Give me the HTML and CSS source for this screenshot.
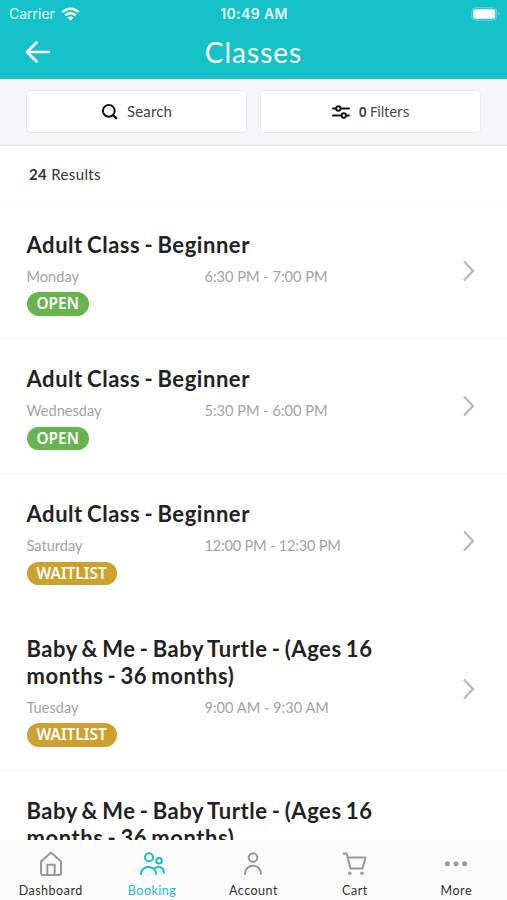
FILE: index.html
```html
<!DOCTYPE html>
<html lang="en">
<head>
<meta charset="utf-8">
<title>Classes</title>
<link rel="stylesheet" href="styles.css">
</head>
<body>
<div class="app">
  <header class="header">
    <div class="status">
      <div class="status-left">
        <span class="carrier">Carrier</span>
        <svg class="wifi" width="19" height="14" viewBox="0 0 19 14" fill="none" stroke="#fff" stroke-width="2.5"><path d="M1.3 5.2C6 .6 13 .6 17.700 5.200"/><path d="M4.300 8.400c3-2.800 7.400-2.800 10.400 0"/><path d="M9.500 13.500 6.600 10.700c1.700-1.500 4.100-1.500 5.800 0z" fill="#fff" stroke="none"/></svg>
      </div>
      <span class="clock">10:49 AM</span>
      <svg class="battery" width="29" height="14" viewBox="0 0 29 14"><rect x=".7" y=".7" width="25" height="12.600" rx="3.800" fill="none" stroke="#fff" stroke-opacity=".35"/><rect x="2.200" y="2.200" width="22" height="9.600" rx="2.200" fill="#fff"/><path d="M27.300 4.800c1.600.8 1.600 3.600 0 4.400z" fill="#fff" fill-opacity=".4"/></svg>
    </div>
    <div class="titlebar">
      <svg class="back" width="26" height="22" viewBox="0 0 26 22" fill="none" stroke="#fff" stroke-width="2.700" stroke-linecap="round" stroke-linejoin="round"><path d="M24 11H2M11.500 1.500 2 11l9.500 9.500"/></svg>
      <h1>Classes</h1>
    </div>
  </header>
  <div class="tools">
    <button class="tool"><svg width="17" height="17" viewBox="0 0 17 17" fill="none" stroke="#111" stroke-width="2"><circle cx="7.800" cy="7.800" r="5.900"/><path d="m11.800 12 4 3.900" stroke-width="2.300"/></svg><span class="t-search">Search</span></button>
    <button class="tool"><svg class="sliders" width="18" height="14" viewBox="0 0 18 14" fill="none" stroke="#111" stroke-width="1.900" stroke-linecap="round"><path d="M1 3.500h2.500M9 3.500h8M1 10.500h8M14.500 10.500H17"/><circle cx="6.300" cy="3.500" r="2.200"/><circle cx="11.800" cy="10.500" r="2.200"/></svg><span class="t-filter"><b>0</b> Filters</span></button>
  </div>
  <main class="list">
    <p class="count"><b>24</b> Results</p>
    <article class="row">
      <div class="info"><h2>Adult Class - Beginner</h2><div class="when"><span>Monday</span><span>6:30 PM - 7:00 PM</span></div><span class="badge open">OPEN</span></div>
      <svg class="chev" width="13" height="22" viewBox="0 0 13 22"><path d="m2 1.500 9 9.500-9 9.500"/></svg>
    </article>
    <article class="row">
      <div class="info"><h2>Adult Class - Beginner</h2><div class="when"><span>Wednesday</span><span>5:30 PM - 6:00 PM</span></div><span class="badge open">OPEN</span></div>
      <svg class="chev" width="13" height="22" viewBox="0 0 13 22"><path d="m2 1.500 9 9.500-9 9.500"/></svg>
    </article>
    <article class="row plain">
      <div class="info"><h2>Adult Class - Beginner</h2><div class="when"><span>Saturday</span><span class="long">12:00 PM - 12:30 PM</span></div><span class="badge wait">WAITLIST</span></div>
      <svg class="chev" width="13" height="22" viewBox="0 0 13 22"><path d="m2 1.500 9 9.500-9 9.500"/></svg>
    </article>
    <article class="row">
      <div class="info"><h2>Baby &amp; Me - Baby Turtle - (Ages 16<br>months - 36 months)</h2><div class="when"><span>Tuesday</span><span>9:00 AM - 9:30 AM</span></div><span class="badge wait">WAITLIST</span></div>
      <svg class="chev" width="13" height="22" viewBox="0 0 13 22"><path d="m2 1.500 9 9.500-9 9.500"/></svg>
    </article>
    <article class="row">
      <div class="info"><h2>Baby &amp; Me - Baby Turtle - (Ages 16<br>months - 36 months)</h2></div>
    </article>
  </main>
  <nav class="tabs">
    <a class="tab"><svg width="28" height="28" viewBox="0 0 28 28"><path d="M4 11.500 14 2.500l10 9V23a2 2 0 0 1-2 2H6a2 2 0 0 1-2-2zM10.300 25V14.800h7.400V25"/></svg><span>Dashboard</span></a>
    <a class="tab active"><svg width="28" height="28" viewBox="0 0 28 28"><circle cx="11" cy="7.300" r="4"/><circle cx="21" cy="10.800" r="2.800"/><path d="M3 24c0-9.500 14.500-9.500 15.300 0M17 18.300c3.500-3 8.800-1 9 4.500"/></svg><span>Booking</span></a>
    <a class="tab"><svg width="28" height="28" viewBox="0 0 28 28"><circle cx="14" cy="7.500" r="4.300"/><path d="M6 24c0-11 16-11 16 0"/></svg><span>Account</span></a>
    <a class="tab"><svg width="28" height="28" viewBox="0 0 28 28"><path d="M2.500 3.500h3.200L9.500 18.500h12L24.500 7.500H7"/><g class="dots"><circle cx="8.800" cy="23.300" r="1.700"/><circle cx="21" cy="23.300" r="1.700"/></g></svg><span>Cart</span></a>
    <a class="tab"><svg width="28" height="28" viewBox="0 0 28 28"><g class="dots"><circle cx="5.400" cy="13.800" r="2.500"/><circle cx="14" cy="13.800" r="2.500"/><circle cx="22.600" cy="13.800" r="2.500"/></g></svg><span>More</span></a>
  </nav>
</div>
</body>
</html>
```
FILE: styles.css
```css
* { box-sizing: border-box; }
body { margin: 0; font-family: Lato, "Noto Sans", sans-serif; color: #222; background: #fff; }
h1, h2, p { margin: 0; }
.app { display: flex; flex-direction: column; width: 507px; height: 900px; overflow: hidden; }
.header { flex: none; height: 79px; background: #14c2c8; color: #fff; border-bottom: 1px solid #2bb9c0; }
.status { display: grid; grid-template-columns: 1fr auto 1fr; align-items: center; height: 27px; padding: 0 8px 0 9px; font-family: Inter, sans-serif; }
.status-left { display: flex; align-items: center; gap: 6px; }
.carrier { font-size: 14px; color: #e4fbfb; }
.clock { font-size: 14px; font-weight: 600; letter-spacing: .4px; color: #e8fcfc; }
.battery { justify-self: end; margin-right: -1px; }
.titlebar { display: grid; grid-template-columns: 1fr auto 1fr; align-items: center; height: 50px; padding: 0 25px; }
h1 { font-size: 28px; line-height: 34px; font-weight: 400; letter-spacing: 1px; }
.tools { flex: none; display: grid; grid-template-columns: 1fr 1fr; gap: 13px; height: 67px; padding: 11px 26px 12px; background: #f5f5f8; border-bottom: 1px solid #e9e9ec; }
.tool { display: flex; align-items: center; justify-content: center; gap: 9px; background: #fff; border: 1px solid #e9e9ed; border-radius: 5px; font: 400 15px/20px Lato, sans-serif; color: #444; padding: 0; }
.t-search { padding-bottom: 2px; letter-spacing: .1px; }
.t-filter { font: 400 14px/20px "Noto Sans", sans-serif; letter-spacing: -.1px; }
.t-filter b { font-weight: 600; }
.list { flex: 1; min-height: 0; overflow: hidden; }
.count { height: 58.500px; padding-left: 29px; font-size: 15px; line-height: 57px; letter-spacing: .35px; color: #333; border-bottom: 1px solid #fcfcfc; }
.row { display: flex; justify-content: space-between; align-items: center; padding: 26px 32px 22.800px 26.500px; border-bottom: 1px solid #f9f9f9; }
.row.plain { border-color: transparent; }
h2 { font-size: 22px; line-height: 27px; font-weight: 700; letter-spacing: .55px; word-spacing: -1.700px; white-space: nowrap; }
.when { display: grid; grid-template-columns: 178px auto; height: 34.500px; font-size: 14.600px; line-height: 37px; color: #a4a4a4; }
.long { letter-spacing: -.2px; }
.badge { display: block; width: fit-content; height: 23.500px; padding: 0 10px; border-radius: 12px; color: #fff; font: 600 15.400px/23.500px "Noto Sans", sans-serif; }
.open { background: #67b54f; }
.wait { background: #cda12e; }
.chev { fill: none; stroke: #b8b8b8; stroke-width: 2.300; margin-bottom: 4px; }
.tabs { flex: none; display: grid; grid-template-columns: repeat(5, 1fr); height: 60px; background: #fafafa; }
.tab { display: flex; flex-direction: column; align-items: center; padding-top: 10px; font-size: 12.500px; line-height: 16px; color: #333; letter-spacing: .5px; }
.tab svg { fill: none; stroke: #999; stroke-width: 2; stroke-linecap: round; stroke-linejoin: round; }
.tab span { margin-top: 5px; }
.tab .dots { fill: #999; stroke: none; }
.tab.active { color: #1dbdc8; }
.tab.active svg { stroke: #1dbdc8; }
```
